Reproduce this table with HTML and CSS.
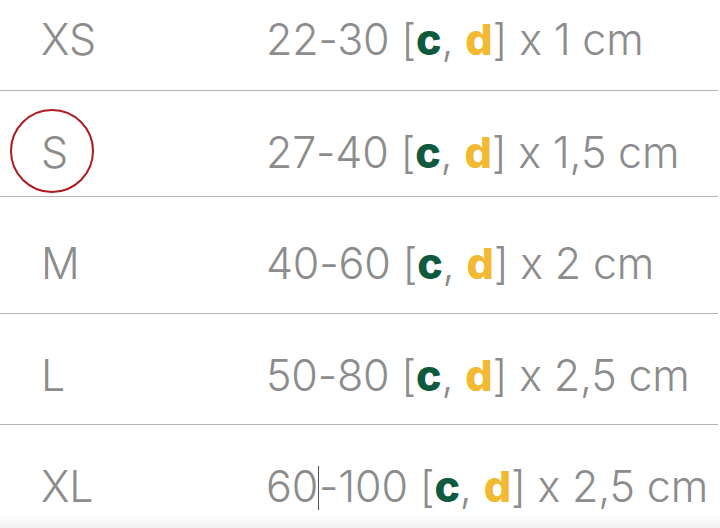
FILE: index.html
```html
<!DOCTYPE html>
<html lang="es">
<head>
<meta charset="utf-8">
<link rel="stylesheet" href="styles.css">
</head>
<body>
<div class="table">
  <div class="row first">
    <div class="size">XS</div>
    <div class="dim">22-30 [<b class="c">c</b>, <b class="d">d</b>] x 1 cm</div>
  </div>
  <div class="row">
    <div class="size"><span class="ring">S</span></div>
    <div class="dim">27-40 [<b class="c">c</b>, <b class="d">d</b>] x 1,5 cm</div>
  </div>
  <div class="row tall">
    <div class="size">M</div>
    <div class="dim">40-60 [<b class="c">c</b>, <b class="d">d</b>] x 2 cm</div>
  </div>
  <div class="row">
    <div class="size">L</div>
    <div class="dim">50-80 [<b class="c">c</b>, <b class="d">d</b>] x 2,5 cm</div>
  </div>
  <div class="row last">
    <div class="size">XL</div>
    <div class="dim">60<span class="caret"></span>-100 [<b class="c">c</b>, <b class="d">d</b>] x 2,5 cm</div>
  </div>
</div>
<div class="shade"></div>
</body>
</html>
```
FILE: styles.css
```css
html, body {
  margin: 0;
  padding: 0;
  background: #ffffff;
  height: 528px;
  overflow: hidden;
}
body {
  font-family: Inter, "Noto Sans", sans-serif;
  font-weight: 300;
  color: #8c8c8c;
  position: relative;
}
.table {
  display: grid;
  grid-template-rows: 91px 106px 117px 111px 1fr;
  width: 718px;
  height: 528px;
}
.row {
  display: grid;
  grid-template-columns: 266px 1fr;
  border-bottom: 1px solid #b4b4b4;
  padding-top: 39px;
  font-size: 43px;
  line-height: 44px;
  letter-spacing: -0.2px;
}
.row.first { padding-top: 17px; }
.row.tall { padding-top: 44px; }
.row.last { border-bottom: none; }
.size {
  padding-left: 41px;
}
.dim {
  white-space: nowrap;
}
.c, .d {
  font-weight: 800;
}
.c { color: #0f5a3e; }
.d { color: #f2b933; }
.ring {
  position: relative;
}
.ring::before {
  content: "";
  position: absolute;
  left: -31px;
  top: -17px;
  width: 80px;
  height: 80px;
  border: 2px solid #b0191e;
  border-radius: 50%;
}
.caret {
  display: inline-block;
  width: 1px;
  height: 44px;
  background: #555;
  vertical-align: -8px;
}
.shade {
  position: absolute;
  left: 0;
  right: 0;
  bottom: 0;
  height: 14px;
  background: linear-gradient(#ffffff, #f1f1f1);
}
```
